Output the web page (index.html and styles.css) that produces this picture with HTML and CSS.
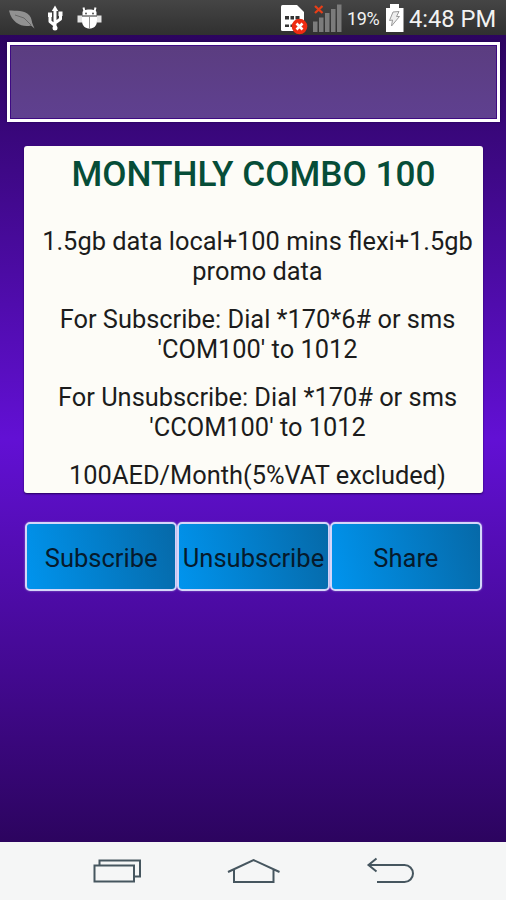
FILE: index.html
```html
<!DOCTYPE html>
<html lang="en">
<head>
    <meta charset="UTF-8">
    <title>Monthly Combo 100</title>
    <link rel="stylesheet" href="styles.css">
</head>
<body>
    <div class="screen">
        <div class="status-bar">
            <svg class="status-left" width="110" height="35" viewBox="0 0 110 35">
                <!-- leaf -->
                <path d="M9 10.500C16 11 24 9.500 29.500 15.500C32 18.500 31.500 22 33 25L34.500 28.500L31 25.500C23 27.500 12 24 9 10.500Z" fill="#919191"/>
                <path d="M15 15L24 18L31 25" stroke="#666" stroke-width="1" fill="none"/>
                <!-- usb -->
                <path d="M55 9V28M55 25.500L50 21.500V15M55 23L60.500 19V13" fill="none" stroke="#fff" stroke-width="3" stroke-linejoin="round"/>
                <path d="M51.800 11L55 5.500L58.200 11Z" fill="#fff"/>
                <path d="M48 12.500H52V17H48ZM58.500 11.500H62.500V16H58.500Z" fill="#fff"/>
                <circle cx="55" cy="28" r="2.500" fill="#fff"/>
                <!-- debug bug -->
                <path d="M82.500 15.500V12C83 10.500 85 9.500 89.500 9.500S96 10.500 96.500 12V15.500Z" fill="#fff"/>
                <path d="M84.500 11.500L83.500 7.500M94.500 11.500L95.500 7.500" stroke="#fff" stroke-width="2"/>
                <path d="M77.500 15.500H82V22.500H77.500ZM97 15.500H101.500V22.500H97Z" fill="#e4e4e4"/>
                <path d="M82 16.500H97V21C97 26 93.500 28.500 89.500 28.500S82 26 82 21Z" fill="#fff"/>
                <path d="M89.500 17V28M82 16H97" stroke="#888" stroke-width=".9"/>
                <circle cx="86" cy="13.500" r="1" fill="#555"/>
                <circle cx="93" cy="13.500" r="1" fill="#555"/>
            </svg>
            <div class="status-right">
                <svg width="64" height="35" viewBox="279 0 64 35">
                    <!-- sim card with error badge -->
                    <path d="M281.500 5H296L303 12V31H281.500Q280 31 280 29.500V6.500Q280 5 281.500 5Z" fill="#fff"/>
                    <path d="M284 16h4v3.500h-4zM289.500 16h3.500v3.500h-3.500zM294.500 16h4v3.500h-4zM284 24.500h4v2.500h-4zM289.500 24.500h3v2.500h-3z" fill="#333"/>
                    <circle cx="298.500" cy="26.500" r="7.800" fill="#ee2c12"/>
                    <path d="M295.500 23.500L301.500 29.500M301.500 23.500L295.500 29.500" stroke="#fff" stroke-width="2.600"/>
                    <!-- signal -->
                    <path d="M312 21.500h4.500V32H312zM318 17.500h4.500V32H318zM324 13h4.500v19H324zM330 9h4.500v23H330zM336 4.500h4.500V32H336z" fill="#7b7b7b"/>
                    <path d="M314 6L321.500 13M321.500 6L314 13" stroke="#e83e18" stroke-width="2.300"/>
                </svg>
                <span class="battery-level">19%</span>
                <svg class="battery" width="18" height="35" viewBox="0 0 18 35">
                    <path d="M0 8H4V4H13V8H17.500V32H0Z" fill="#fff"/>
                    <path d="M7 12L13 11.500L10.500 16.500H13.500L5.500 26L6.500 20L3.500 20.500Z" fill="#eee" stroke="#999" stroke-width="1"/>
                </svg>
                <span class="clock">4:48 PM</span>
            </div>
        </div>

        <div class="banner"></div>

        <div class="card">
            <h1>MONTHLY COMBO 100</h1>
            <p>1.5gb data local+100 mins flexi+1.5gb<br>promo data</p>
            <p>For Subscribe: Dial *170*6# or sms<br>'COM100' to 1012</p>
            <p>For Unsubscribe: Dial *170# or sms<br>'CCOM100' to 1012</p>
            <p>100AED/Month(5%VAT excluded)</p>
        </div>

        <div class="buttons">
            <button type="button">Subscribe</button>
            <button type="button">Unsubscribe</button>
            <button type="button">Share</button>
        </div>

        <div class="nav-bar">
            <svg width="506" height="58" viewBox="0 842 506 58" fill="none" stroke="#46565f" stroke-width="2">
                <path d="M94.500 865.500H134V881.500H94.500Z"/>
                <path d="M99.500 865V860.500H140V876.500H134.500"/>
                <path d="M228 872L253.500 860L279.500 872M234 869.500V882H273.500V869.500"/>
                <path d="M376.500 858.500L368.500 865L376.500 871.500M369 865H404.500A8.500 8.500 0 0 1 404.500 882H377"/>
            </svg>
        </div>
    </div>
</body>
</html>
```
FILE: styles.css
```css
* {
    box-sizing: border-box;
}
body {
    margin: 0;
    font-family: Roboto, sans-serif;
}
svg {
    display: block;
}
.screen {
    display: flex;
    flex-direction: column;
    width: 506px;
    height: 900px;
    background: linear-gradient(#2c045f 35px, #6210d4 439px, #2c045f 842px);
}
.status-bar {
    display: flex;
    justify-content: space-between;
    height: 35px;
    background: linear-gradient(#454545, #303030);
    color: #f2f2f2;
}
.status-right {
    display: flex;
    align-items: center;
    padding-right: 10px;
}
.battery-level {
    width: 33px;
    margin: 2px 6px 0 3px;
    font-size: 18px;
    letter-spacing: -0.4px;
}
.clock {
    width: 87px;
    margin: 2px 0 0 5px;
    font-size: 23.7px;
    white-space: nowrap;
}
.banner {
    height: 80px;
    margin: 7px 6px 0 7px;
    border: 3px solid #fff;
    background: linear-gradient(#5b3d80, #5f4090);
    box-shadow: inset 0 0 0 1px #3e0a82, 0 0 2px #1e0050;
}
.card {
    height: 347px;
    margin: 24px 23px 0 24px;
    padding-left: 8px;
    border-radius: 3px;
    background: #fdfcf7;
    box-shadow: 0 1px 2px #25005c;
    color: #1c1c1c;
    text-align: center;
}
.card h1 {
    margin: 0 8px 32px 0;
    padding-top: 8px;
    color: #064d38;
    font-size: 35.2px;
    font-weight: 500;
    line-height: 40px;
    white-space: nowrap;
}
.card p {
    margin: 0 0 18px;
    font-size: 25.4px;
    line-height: 30px;
    white-space: nowrap;
}
.buttons {
    display: flex;
    height: 69px;
    margin: 29px 24px 0 25px;
}
.buttons button {
    flex: 1 1 0;
    min-width: 0;
    padding: 2px 0 0;
    border: 2px solid #d5d6fa;
    border-radius: 5px;
    background: linear-gradient(75deg, #0094ee, #0669a8);
    box-shadow: 0 0 2px #9d86cf;
    color: #061a2c;
    font-family: Roboto, sans-serif;
    font-size: 25.5px;
    white-space: nowrap;
}
.nav-bar {
    height: 58px;
    margin-top: auto;
    background: #f5f6f6;
}
```
